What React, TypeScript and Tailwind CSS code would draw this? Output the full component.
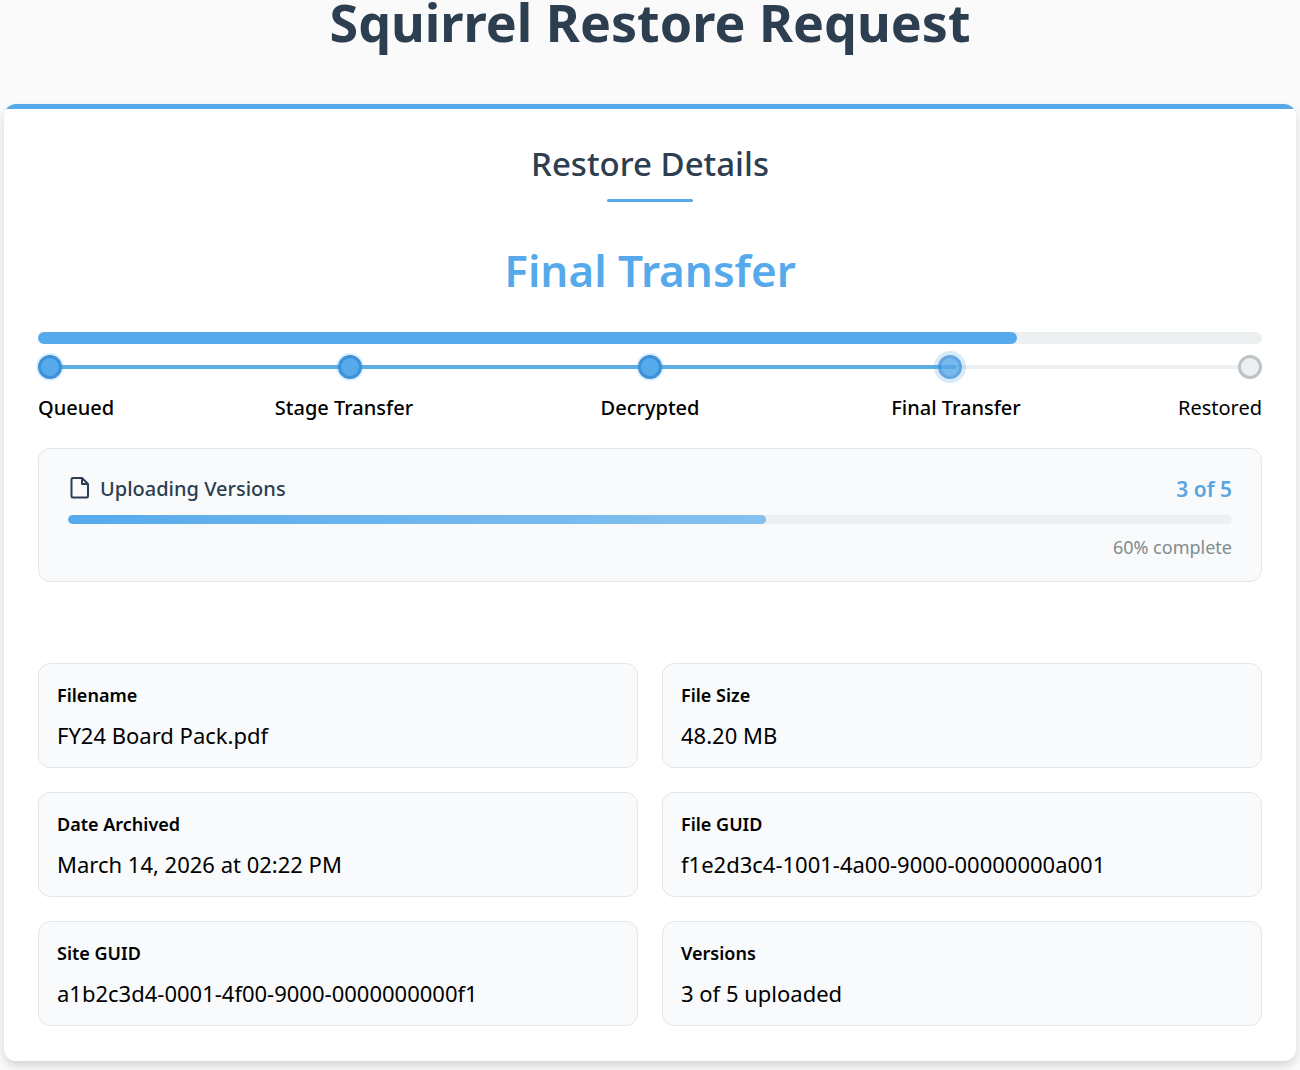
import clsx from 'clsx'

interface Step {
  label: string
  state: 'done' | 'active' | 'pending'
}

const steps: Step[] = [
  { label: 'Queued', state: 'done' },
  { label: 'Stage Transfer', state: 'done' },
  { label: 'Decrypted', state: 'done' },
  { label: 'Final Transfer', state: 'active' },
  { label: 'Restored', state: 'pending' },
]

const details = [
  { label: 'Filename', value: 'FY24 Board Pack.pdf' },
  { label: 'File Size', value: '48.20 MB' },
  { label: 'Date Archived', value: 'March 14, 2026 at 02:22 PM' },
  { label: 'File GUID', value: 'f1e2d3c4-1001-4a00-9000-00000000a001' },
  { label: 'Site GUID', value: 'a1b2c3d4-0001-4f00-9000-0000000000f1' },
  { label: 'Versions', value: '3 of 5 uploaded' },
]

const uploaded = 3
const total = 5

function FileIcon() {
  return (
    <svg className="h-6 w-6" viewBox="0 0 24 24" fill="none" stroke="currentColor" strokeWidth="2" strokeLinejoin="round" aria-hidden="true">
      <path d="M14 1H5a1.500 1.500 0 0 0-1.500 1.500V19A1.500 1.500 0 0 0 5 20.500h13.500A1.500 1.500 0 0 0 20 19V7z" />
      <path d="M14 1v6h6" />
    </svg>
  )
}

function Stepper() {
  const current = steps.findIndex((s) => s.state === 'active')

  return (
    <div className="mt-[11px]">
      <div className="relative flex items-center justify-between">
        {/* Connector line behind the dots */}
        <div className="absolute inset-x-3 h-1 bg-[#ecf0f1]">
          <div className="h-full bg-[#5dade2]" style={{ width: `${(current / (steps.length - 1)) * 100 + 0.5}%` }} />
        </div>
        {steps.map((step) => (
          <span
            key={step.label}
            className={clsx(
              'relative h-6 w-6 rounded-full border-3',
              step.state === 'done' && 'border-[#3d91d8] bg-[#56aaec] shadow-[0_0_0_2px_rgba(86,170,236,0.2)]',
              step.state === 'active' && 'border-[#3d91d8] bg-[#56aaec] opacity-80 shadow-[0_0_0_4px_rgba(86,170,236,0.3)]',
              step.state === 'pending' && 'border-[#bdc3c7] bg-[#ecf0f1]'
            )}
          />
        ))}
      </div>
      <div className="mt-3 grid grid-cols-[1fr_2fr_2fr_2fr_1fr] text-center text-xl leading-[34px] text-black">
        {steps.map((step) => (
          <span
            key={step.label}
            className={clsx(
              'whitespace-nowrap first:text-left last:justify-self-end',
              step.state !== 'pending' && 'font-medium'
            )}
          >
            {step.label}
          </span>
        ))}
      </div>
    </div>
  )
}

function UploadPanel() {
  const percent = Math.round((uploaded / total) * 100)

  return (
    <section className="mt-[23px] rounded-xl border border-[#e3e7ea] bg-[#f8fafc] px-[29px] pt-6 pb-[18px]">
      <div className="flex items-center justify-between text-xl leading-8 font-medium">
        <h3 className="flex items-center gap-2 text-[#2c3e50]">
          <FileIcon />
          Uploading Versions
        </h3>
        <span className="text-[21px] font-semibold text-[#5aa5e0]">
          {uploaded} of {total}
        </span>
      </div>
      <div className="mt-[10px] h-[9px] overflow-hidden rounded-full bg-[#ecf0f1]">
        <div
          className="h-full rounded-full bg-linear-to-r from-[#56aaec] to-[#85c1f0]"
          style={{ width: `${percent}%` }}
        />
      </div>
      <p className="mt-[7px] text-right text-lg leading-8 text-[#7f8c8d]">{percent}% complete</p>
    </section>
  )
}

export default function App() {
  return (
    <div className="min-h-screen bg-[#fafafa] px-1 pb-2 font-['Noto_Sans','Segoe_UI',sans-serif]">
      <h1 className="text-center text-[52px] leading-[44px] font-bold text-[#2c3e50]">Squirrel Restore Request</h1>

      <main className="mt-[60px] overflow-hidden rounded-xl bg-white shadow-[0_5px_10px_rgba(0,0,0,0.14)]">
        <div className="h-[5px] bg-[#56aaec]" />
        <div className="px-[34px] pt-8 pb-[35px]">
          <h2 className="text-center text-[33px] leading-[46px] font-medium text-[#2c3e50]">Restore Details</h2>
          <div className="mx-auto mt-3 h-[3px] w-[86px] rounded-full bg-[#5aa9e6]" />

          <p className="mt-9 text-center text-[44px] leading-[64px] font-semibold text-[#56aaec]">Final Transfer</p>

          <div className="mt-[30px] h-3 rounded-full bg-[#ecf0f1]">
            <div className="h-full w-4/5 rounded-full bg-[#56aaec]" />
          </div>
          <Stepper />

          <UploadPanel />

          <dl className="mt-[81px] grid grid-cols-2 gap-6 text-black">
            {details.map((item) => (
              <div key={item.label} className="rounded-xl border border-[#e3e7ea] bg-[#f8fafc] px-[18px] py-4">
                <dt className="text-lg leading-[30px] font-semibold">{item.label}</dt>
                <dd className="mt-[10px] text-[22px] leading-[31px]">{item.value}</dd>
              </div>
            ))}
          </dl>
        </div>
      </main>
    </div>
  )
}
